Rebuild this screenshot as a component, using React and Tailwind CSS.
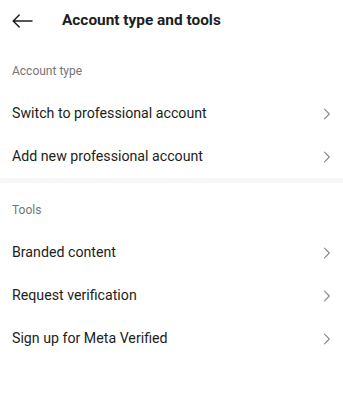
import React from "react";

const font = { fontFamily: "Roboto, 'Noto Sans', sans-serif" };

function Chevron() {
  return (
    <svg width="8" height="12" viewBox="0 0 8 12" fill="none" className="shrink-0">
      <path d="M1.5 1.2 L6.3 6 L1.5 10.8" stroke="#8a8d91" strokeWidth="1.2" strokeLinecap="round" strokeLinejoin="round" />
    </svg>
  );
}

function Row({ label }) {
  return (
    <div className="flex h-[43px] items-center justify-between pl-3 pr-[12px]">
      <span className="text-[14.2px] text-[#1c1e21]">{label}</span>
      <Chevron />
    </div>
  );
}

function SectionLabel({ children, className }) {
  return (
    <div className={`px-3 text-[12px] leading-[16px] text-[#737578] ${className}`}>{children}</div>
  );
}

export default function App() {
  return (
    <div className="h-[408px] w-[343px] bg-white" style={font}>
      <div className="flex h-[41px] items-center pl-3">
        <svg width="21" height="14" viewBox="0 0 21 14" fill="none">
          <path d="M20 7 H1.5 M7.2 1 L1.2 7 L7.2 13" stroke="#1c1e21" strokeWidth="1.5" strokeLinecap="round" strokeLinejoin="round" />
        </svg>
        <span className="ml-[29px] text-[15.4px] font-bold text-[#1c1e21]">Account type and tools</span>
      </div>
      <SectionLabel className="mt-[22px]">Account type</SectionLabel>
      <div className="mt-[13px]">
        <Row label="Switch to professional account" />
        <Row label="Add new professional account" />
      </div>
      <div className="h-[5px] bg-[#f6f7f8]" />
      <SectionLabel className="mt-[19px]">Tools</SectionLabel>
      <div className="mt-[13px]">
        <Row label="Branded content" />
        <Row label="Request verification" />
        <Row label="Sign up for Meta Verified" />
      </div>
    </div>
  );
}
